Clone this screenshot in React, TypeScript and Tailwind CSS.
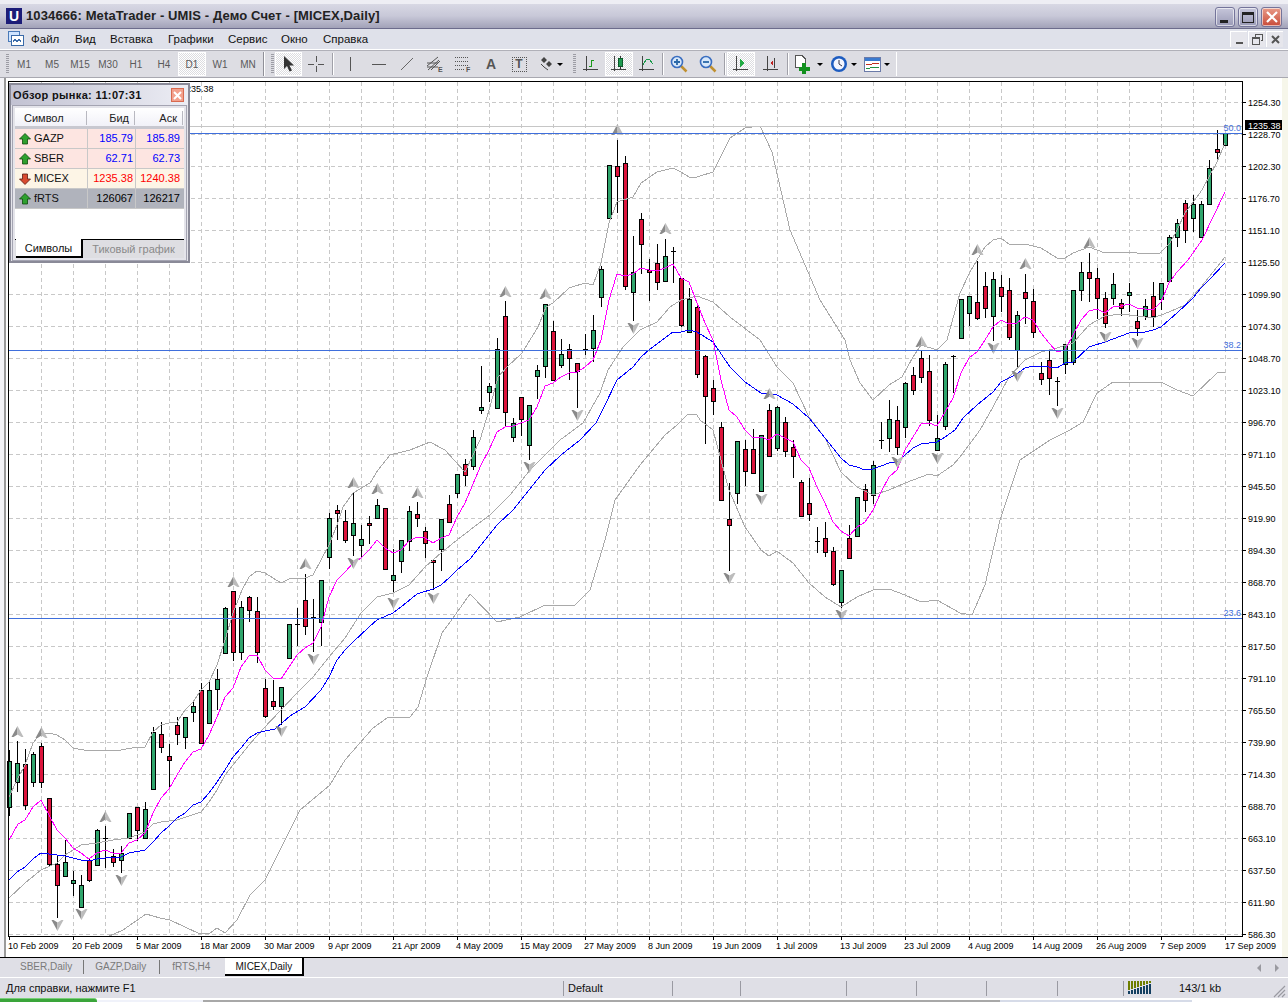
import React from 'react';

// [type, high, bodyTop, bodyBottom, low], bars are 8px apart starting at x=9
type Bar = ['g' | 'r' | 'd', number, number, number, number];

const bars: Bar[] = [
  ['g', 750, 761, 807, 816], ['g', 741, 763, 782, 792], ['r', 749, 764, 805, 810], ['g', 752, 754, 782, 787],
  ['r', 743, 746, 782, 788], ['r', 798, 798, 864, 867], ['r', 855, 864, 885, 918], ['g', 840, 862, 876, 877],
  ['g', 871, 880, 883, 896], ['g', 875, 885, 907, 907], ['r', 859, 860, 880, 882], ['g', 829, 830, 865, 865],
  ['d', 826, 838, 838, 868], ['r', 849, 856, 862, 867], ['g', 846, 853, 860, 873], ['g', 813, 813, 838, 838],
  ['r', 807, 807, 830, 841], ['g', 802, 809, 838, 838], ['g', 727, 732, 789, 789], ['r', 722, 734, 747, 753],
  ['r', 744, 756, 760, 789], ['r', 717, 725, 734, 745], ['g', 717, 717, 737, 749], ['g', 700, 706, 712, 722],
  ['r', 683, 690, 743, 743], ['g', 680, 690, 723, 723], ['g', 669, 679, 689, 710], ['g', 607, 608, 653, 653],
  ['r', 591, 591, 652, 661], ['g', 601, 607, 652, 660], ['r', 596, 597, 610, 622], ['r', 597, 611, 652, 663],
  ['r', 679, 688, 716, 718], ['r', 680, 701, 706, 710], ['g', 687, 687, 706, 725], ['g', 624, 624, 658, 658],
  ['d', 608, 624, 624, 646], ['r', 574, 600, 626, 635], ['d', 599, 617, 617, 652], ['g', 580, 580, 622, 646],
  ['g', 513, 518, 557, 569], ['r', 505, 510, 513, 540], ['r', 510, 521, 540, 543], ['g', 493, 523, 535, 556],
  ['g', 525, 539, 545, 557], ['r', 516, 523, 525, 544], ['g', 499, 505, 518, 519], ['r', 508, 508, 569, 569],
  ['g', 549, 575, 580, 593], ['g', 540, 540, 561, 573], ['g', 506, 511, 541, 551], ['r', 502, 514, 518, 527],
  ['r', 527, 531, 543, 558], ['r', 560, 560, 562, 590], ['g', 519, 519, 549, 571], ['r', 495, 504, 522, 523],
  ['g', 474, 474, 493, 498], ['r', 459, 464, 475, 486], ['g', 430, 437, 466, 470], ['g', 366, 407, 410, 414],
  ['g', 383, 386, 392, 402], ['g', 338, 349, 408, 408], ['r', 301, 316, 412, 427], ['g', 418, 423, 437, 442],
  ['r', 397, 397, 419, 436], ['g', 405, 405, 445, 460], ['g', 365, 370, 376, 399], ['g', 304, 304, 366, 378],
  ['r', 321, 331, 380, 380], ['g', 339, 354, 365, 368], ['r', 344, 349, 358, 380], ['r', 363, 363, 371, 408],
  ['d', 334, 349, 349, 355], ['g', 315, 330, 348, 362], ['g', 266, 269, 297, 307], ['g', 165, 165, 218, 218],
  ['r', 140, 166, 176, 213], ['r', 156, 163, 286, 290], ['g', 236, 272, 292, 321], ['r', 213, 219, 244, 274],
  ['r', 259, 270, 272, 301], ['r', 244, 263, 282, 290], ['g', 239, 256, 281, 281], ['d', 247, 251, 251, 283],
  ['r', 278, 278, 325, 327], ['g', 288, 299, 332, 332], ['r', 303, 307, 374, 378], ['r', 355, 356, 396, 444],
  ['r', 380, 388, 401, 415], ['r', 422, 427, 500, 501], ['r', 483, 519, 525, 571], ['g', 441, 441, 493, 504],
  ['r', 440, 449, 471, 486], ['r', 429, 449, 473, 474], ['g', 435, 435, 491, 491], ['r', 404, 410, 456, 457],
  ['g', 406, 407, 448, 451], ['r', 417, 422, 451, 457], ['r', 440, 447, 456, 478], ['r', 480, 482, 516, 517],
  ['r', 478, 503, 514, 521], ['d', 527, 541, 541, 553], ['r', 522, 538, 552, 557], ['r', 547, 551, 584, 586],
  ['g', 570, 570, 602, 608], ['r', 525, 538, 558, 559], ['g', 497, 497, 536, 536], ['r', 484, 489, 500, 512],
  ['g', 461, 465, 495, 504], ['d', 422, 440, 440, 449], ['g', 400, 419, 438, 452], ['r', 406, 420, 447, 455],
  ['g', 382, 383, 427, 438], ['r', 367, 375, 390, 395], ['r', 351, 358, 377, 383], ['r', 355, 371, 420, 426],
  ['g', 415, 438, 450, 450], ['g', 362, 364, 426, 430], ['d', 355, 356, 356, 393], ['g', 299, 299, 338, 338],
  ['g', 296, 296, 313, 326], ['r', 261, 302, 318, 320], ['r', 272, 286, 308, 318], ['g', 272, 279, 316, 341],
  ['r', 275, 287, 296, 312], ['r', 278, 290, 337, 340], ['g', 311, 315, 350, 369], ['r', 274, 292, 298, 324],
  ['r', 289, 301, 332, 338], ['r', 362, 373, 379, 385], ['r', 349, 360, 378, 395], ['d', 377, 381, 381, 406],
  ['g', 344, 344, 364, 374], ['g', 290, 290, 362, 365], ['g', 262, 272, 290, 301], ['r', 253, 272, 278, 302],
  ['r', 268, 278, 298, 319], ['r', 292, 298, 323, 328], ['g', 273, 284, 298, 305], ['r', 299, 303, 308, 316],
  ['g', 283, 292, 295, 312], ['r', 310, 321, 328, 336], ['g', 299, 306, 316, 320], ['r', 282, 296, 316, 327],
  ['g', 283, 283, 299, 310], ['g', 235, 237, 281, 282], ['g', 219, 223, 237, 247], ['r', 200, 203, 230, 243],
  ['g', 195, 204, 218, 232], ['g', 201, 204, 237, 238], ['g', 160, 168, 204, 204], ['r', 130, 149, 152, 162],
  ['g', 133, 133, 145, 145],
];

const magenta =
  '8,842 18,824 25,820 33,807 41,800 49,815 57,830 65,838 73,848 81,853 89,859 97,853 105,850 113,853 121,853 129,843 137,840 145,833 153,813 161,798 169,789 177,775 185,762 193,752 201,749 209,735 217,717 225,697 233,688 241,667 249,656 257,655 265,670 273,678 281,679 289,667 297,655 305,648 313,643 321,627 329,597 337,580 345,572 353,563 361,558 369,550 377,540 385,548 393,553 401,550 409,541 417,537 425,538 433,543 441,538 449,535 457,517 465,503 473,484 481,465 489,450 497,432 505,427 513,426 521,423 529,420 537,407 545,386 553,383 561,377 569,373 577,372 585,367 593,360 601,340 609,300 617,274 625,276 633,274 641,268 649,270 657,271 665,268 673,264 681,278 689,282 697,303 705,323 713,340 721,380 729,410 737,417 745,430 753,438 761,437 769,440 777,434 785,438 793,442 801,460 809,468 817,487 825,503 833,522 841,531 849,536 857,527 865,522 873,510 881,492 889,477 897,470 905,450 913,437 921,424 929,423 937,426 945,412 953,398 961,373 969,358 977,352 985,340 993,327 1001,320 1009,324 1017,323 1025,317 1033,320 1041,333 1049,343 1057,352 1065,350 1073,335 1081,320 1089,311 1097,309 1105,313 1113,307 1121,306 1129,304 1137,308 1145,309 1153,310 1161,302 1169,283 1177,272 1188,260 1202,240 1225,192';
const blue =
  '9,880 17,872 25,867 33,859 41,853 49,854 65,856 81,860 89,861 97,859 105,858 121,857 129,853 145,850 153,842 161,833 169,826 177,818 185,813 193,805 201,802 209,793 217,782 225,770 233,757 241,748 249,738 257,733 265,731 275,729 290,716 305,707 321,690 329,677 337,660 345,650 353,642 369,627 377,620 393,613 401,607 417,594 433,589 441,585 449,578 457,570 470,559 481,545 497,525 513,510 529,490 545,470 561,455 580,440 596,423 604,407 617,380 633,367 641,357 649,350 665,338 673,332 681,332 689,330 697,332 713,342 730,367 745,382 761,393 777,395 793,404 809,418 825,438 841,458 849,465 857,467 865,470 873,469 881,466 889,463 897,462 905,455 913,448 921,444 937,442 945,437 955,430 963,418 977,405 993,392 1001,382 1017,374 1025,368 1033,366 1049,367 1057,368 1065,363 1073,362 1089,347 1105,342 1121,336 1129,333 1145,332 1153,330 1161,327 1169,320 1177,313 1193,298 1201,288 1209,280 1225,263';
const bandTop =
  '9,797 17,780 25,765 33,743 41,733 49,733 57,735 65,740 73,748 89,751 105,750 121,750 137,747 145,747 153,732 161,725 169,723 177,722 185,710 193,702 201,690 209,682 217,665 225,640 233,613 242,590 249,577 257,571 265,573 273,578 281,583 289,579 297,578 305,578 313,575 321,560 329,545 337,525 343,507 353,493 370,483 378,470 390,455 410,450 430,442 445,450 465,472 480,440 490,407 498,377 507,367 522,353 538,327 546,307 553,303 569,288 585,283 593,285 601,263 609,223 617,202 633,197 641,183 657,172 673,168 681,172 689,177 697,177 713,172 730,138 745,128 760,126 772,152 790,230 820,300 845,340 850,360 860,383 873,400 889,385 902,377 913,357 921,345 937,350 947,340 960,293 970,272 977,260 985,247 993,240 1001,238 1009,244 1025,244 1041,248 1057,258 1065,258 1073,253 1089,247 1105,253 1121,252 1153,254 1160,253 1170,243 1177,230 1185,213 1202,190 1217,162 1225,143';
const bandMid =
  '9,898 25,883 41,870 57,863 65,855 81,845 97,843 113,840 129,838 145,832 153,824 161,822 177,820 201,812 209,802 217,790 225,775 233,765 241,755 249,745 262,730 281,710 297,693 313,677 329,657 345,638 361,613 377,597 393,593 409,585 425,567 441,553 457,540 470,530 490,515 510,495 530,470 545,455 560,440 583,423 600,393 608,370 623,347 640,330 657,322 670,307 681,300 697,296 713,302 730,317 760,340 777,367 793,383 809,417 825,438 833,455 841,472 857,487 873,495 889,490 905,483 929,474 937,476 953,465 960,457 980,430 993,407 1009,377 1025,360 1041,352 1057,348 1073,343 1089,325 1105,316 1121,314 1153,318 1169,312 1185,305 1201,287 1225,257';
const bandLow =
  '95,936 107,937 123,930 146,914 160,918 170,920 200,934 210,933 217,928 225,933 237,920 250,895 265,880 285,840 300,810 330,785 345,760 373,728 387,718 410,717 418,707 427,677 442,633 453,618 470,594 497,622 520,617 545,605 575,605 590,590 605,540 615,500 640,465 665,435 677,425 688,414 697,415 700,420 713,430 729,490 745,527 761,550 769,556 777,551 793,563 809,583 825,597 841,607 857,597 873,590 889,589 905,595 921,602 937,600 960,613 972,615 985,585 1000,520 1020,460 1050,440 1070,430 1083,422 1097,393 1113,382 1161,382 1177,390 1193,396 1217,373 1225,372';

const upArrows = [[17, 732], [41, 733], [105, 817], [233, 582], [305, 564], [353, 483], [377, 489], [417, 493], [505, 292], [545, 294], [617, 130], [665, 229], [769, 394], [921, 342], [977, 250], [1025, 264], [1089, 243]];
const downArrows = [[57, 925], [81, 914], [121, 880], [281, 731], [313, 659], [353, 563], [393, 603], [433, 598], [529, 467], [577, 415], [633, 328], [729, 578], [761, 499], [841, 615], [897, 462], [937, 458], [993, 348], [1017, 376], [1057, 413], [1105, 337], [1137, 343]];

const prices = ['1254.30', '1228.70', '1202.30', '1176.70', '1151.10', '1125.50', '1099.90', '1074.30', '1048.70', '1023.10', '996.70', '971.10', '945.50', '919.90', '894.30', '868.70', '843.10', '817.50', '791.10', '765.50', '739.90', '714.30', '688.70', '663.10', '637.50', '611.90', '586.30'];
const dates = ['10 Feb 2009', '20 Feb 2009', '5 Mar 2009', '18 Mar 2009', '30 Mar 2009', '9 Apr 2009', '21 Apr 2009', '4 May 2009', '15 May 2009', '27 May 2009', '8 Jun 2009', '19 Jun 2009', '1 Jul 2009', '13 Jul 2009', '23 Jul 2009', '4 Aug 2009', '14 Aug 2009', '26 Aug 2009', '7 Sep 2009', '17 Sep 2009'];

function Chart() {
  const gridX: number[] = [];
  for (let x = 41; x < 1242; x += 32) gridX.push(x);

  return (
    <svg width={1276} height={879} viewBox="6 78 1276 879" className="block" fontSize={9}>
      <rect x={6} y={78} width={1276} height={879} fill="#ffffff" />
      <g stroke="#c8c8c8" strokeDasharray="4 3" shapeRendering="crispEdges">
        {gridX.map((x) => (
          <line key={x} x1={x + 0.5} y1={82} x2={x + 0.5} y2={936} />
        ))}
        {prices.map((_, i) => (
          <line key={i} x1={9} y1={102.5 + i * 32} x2={1242} y2={102.5 + i * 32} />
        ))}
      </g>
      <g shapeRendering="crispEdges">
        {bars.map(([t, hi, top, bot, lo], i) => {
          const x = 9 + i * 8;
          return (
            <g key={i}>
              <line x1={x + 0.5} y1={hi} x2={x + 0.5} y2={lo} stroke="#000" />
              {t === 'd' ? (
                <line x1={x - 2} y1={top + 0.5} x2={x + 3} y2={top + 0.5} stroke="#000" />
              ) : (
                <rect x={x - 1.5} y={top + 0.5} width={4} height={Math.max(bot - top, 1)} fill={t === 'g' ? '#2fa56c' : '#dc143c'} stroke="#000" />
              )}
            </g>
          );
        })}
      </g>
      <g fill="none" strokeWidth={1} shapeRendering="crispEdges">
        <polyline points={bandTop} stroke="#a9a9a9" />
        <polyline points={bandMid} stroke="#a9a9a9" />
        <polyline points={bandLow} stroke="#a9a9a9" />
        <polyline points={blue} stroke="#0000ff" />
        <polyline points={magenta} stroke="#ff00ff" />
      </g>
      <g>
        {upArrows.map(([x, y]) => (
          <g key={`${x}-${y}`} transform={`translate(${x + 0.5} ${y})`}>
            <path d="M0 -6 L-6 5 L-4 5 L0 2.5Z" fill="#8a8a8a" />
            <path d="M0 -6 L6 5 L4 5 L0 2.5Z" fill="#bcbcbc" />
          </g>
        ))}
        {downArrows.map(([x, y]) => (
          <g key={`${x}-${y}`} transform={`translate(${x + 0.5} ${y})`}>
            <path d="M0 6 L-6 -5 L-4 -5 L0 -2.5Z" fill="#8a8a8a" />
            <path d="M0 6 L6 -5 L4 -5 L0 -2.5Z" fill="#bcbcbc" />
          </g>
        ))}
      </g>
      <g shapeRendering="crispEdges" stroke="#c6c6c6">
        <line x1={8} y1={126.5} x2={1242} y2={126.5} />
      </g>
      <g shapeRendering="crispEdges" stroke="#3f6fdc">
        <line x1={8} y1={133.5} x2={1242} y2={133.5} />
        <line x1={8} y1={350.5} x2={1242} y2={350.5} />
        <line x1={8} y1={618.5} x2={1242} y2={618.5} />
      </g>
      <g fill="#3f6fdc" textAnchor="end">
        <text x={1241} y={131}>50.0</text>
        <text x={1241} y={348}>38.2</text>
        <text x={1241} y={616}>23.6</text>
      </g>
      <text x={181} y={92} fill="#000">1235.38</text>
      {/* axes */}
      <rect x={8.5} y={81.5} width={1234} height={855} fill="none" stroke="#000" shapeRendering="crispEdges" />
      <g shapeRendering="crispEdges" stroke="#000">
        {prices.map((_, i) => (
          <line key={i} x1={1243} y1={102.5 + i * 32} x2={1246} y2={102.5 + i * 32} />
        ))}
        {dates.map((_, i) => (
          <line key={i} x1={9.5 + i * 64} y1={937} x2={9.5 + i * 64} y2={940} />
        ))}
      </g>
      <g fill="#000">
        {prices.map((p, i) => (
          <text key={p} x={1248} y={106 + i * 32}>{p}</text>
        ))}
        {dates.map((d, i) => (
          <text key={d} x={i === 19 ? 1225 : 8 + i * 64} y={949}>{d}</text>
        ))}
      </g>
      <rect x={1245} y={120} width={37} height={10} fill="#000" />
      <text x={1248} y={129} fill="#fff">1235.38</text>
    </svg>
  );
}

const pressed =
  'bg-[repeating-conic-gradient(#ffffff_0%_25%,#dcdce0_0%_50%)] bg-[length:2px_2px] border border-white';

function Grip() {
  return <div className="w-[3px] h-[20px] mx-[1px] bg-[repeating-linear-gradient(#9c9ca4_0_1px,transparent_1px_2px)]" />;
}

function Sep({ tight }: { tight?: boolean }) {
  return <div className={`w-[2px] h-[22px] border-l border-[#a0a0a8] bg-white ${tight ? 'mx-[1px]' : 'mx-[2px]'}`} />;
}

function TfButton({ label, active }: { label: string; active?: boolean }) {
  return (
    <div className={`w-[28px] h-[24px] pt-[1px] flex items-center justify-center text-[10px] text-[#5a5a5a] ${active ? pressed : ''}`}>
      {label}
    </div>
  );
}

function Tool({ children, active, w }: { children: React.ReactNode; active?: boolean; w?: string }) {
  return (
    <div className={`${w ?? 'w-[28px]'} h-[24px] shrink-0 flex items-center justify-center ${active ? pressed : ''}`}>
      {children}
    </div>
  );
}

function Caret() {
  return <div className="w-0 h-0 ml-[3px] border-x-[3px] border-x-transparent border-t-[3px] border-t-black" />;
}

function AxisIcon({ children }: { children: React.ReactNode }) {
  return (
    <svg width={16} height={18} viewBox="0 0 16 18" shapeRendering="crispEdges">
      <path d="M3.5 1V16M0 14.5H15" stroke="#444" fill="none" />
      {children}
    </svg>
  );
}

function Magnifier({ plus }: { plus?: boolean }) {
  return (
    <svg width={18} height={18} viewBox="0 0 18 18">
      <line x1={11} y1={11} x2={16.5} y2={16.5} stroke="#c09030" strokeWidth={2.5} />
      <circle cx={7} cy={7} r={5.5} fill="#d8e8fa" stroke="#3a6ec0" strokeWidth={1.6} />
      <path d={plus ? 'M4 7H10M7 4V10' : 'M4 7H10'} stroke="#2a68a8" strokeWidth={1.8} />
    </svg>
  );
}

function Toolbar() {
  return (
    <div className="h-[27px] flex items-center pl-[5px] bg-[#dddde3] border-b border-[#a8a8b0] text-[#444]">
      <Grip />
      {['M1', 'M5', 'M15', 'M30', 'H1', 'H4'].map((t) => (
        <TfButton key={t} label={t} />
      ))}
      <TfButton label="D1" active />
      <TfButton label="W1" />
      <TfButton label="MN" />
      <div className="w-[1px]" />
      <div className="w-[1px] h-[24px] bg-[#909098]" />
      <div className="w-[1px] h-[24px] bg-white" />
      <div className="w-[5px]" />
      <Grip />
      <Tool active w="w-[27px]">
        <svg width={12} height={16} viewBox="0 0 12 16"><path d="M1 0V13L4 10L6.5 15.5L9 14.5L6.5 9.5L11 9.5Z" fill="#333" /></svg>
      </Tool>
      <Tool>
        <svg width={16} height={16} viewBox="0 0 16 16" shapeRendering="crispEdges"><path d="M8.5 0V6M8.5 10V16M0 8.5H6M10 8.5H16" stroke="#555" fill="none" /></svg>
      </Tool>
      <Sep />
      <Tool w="w-[28px]"><div className="w-[1px] h-[14px] bg-[#555]" /></Tool>
      <Tool w="w-[29px]"><div className="w-[14px] h-[1px] bg-[#555]" /></Tool>
      <Tool>
        <svg width={14} height={14} viewBox="0 0 14 14"><line x1={1} y1={13} x2={13} y2={1} stroke="#666" /></svg>
      </Tool>
      <Tool>
        <svg width={18} height={18} viewBox="0 0 18 18" fill="none" stroke="#555"><path d="M1 11L12 2M1 8H12M1 12H12M2 15L13 5M5 15L14 6" /><text x={12} y={17} fontSize={7} fontWeight={700} fill="#555" stroke="none">E</text></svg>
      </Tool>
      <Tool>
        <svg width={18} height={18} viewBox="0 0 18 18" fill="none" stroke="#555" strokeDasharray="1 1" shapeRendering="crispEdges"><path d="M1 2.5H14M1 6.5H14M1 10.5H14M1 14.5H10" /><text x={12} y={17} fontSize={7} fontWeight={700} fill="#555" stroke="none" strokeDasharray="0">F</text></svg>
      </Tool>
      <Tool><span className="text-[14px] font-bold text-[#555]">A</span></Tool>
      <Tool>
        <div className="w-[15px] h-[15px] border border-dotted border-[#555] flex items-center justify-center text-[12px] font-bold text-[#555] leading-none">T</div>
      </Tool>
      <Tool w="w-[36px]">
        <svg width={14} height={14} viewBox="0 0 14 14" fill="#444"><path d="M4 0L7 3L4 6L1 3ZM9 4L12 7L9 10L6 7Z" /><path d="M1 7L4 10L8 13" stroke="#444" fill="none" /></svg>
        <Caret />
      </Tool>
      <div className="w-[3px]" />
      <Grip />
      <Tool>
        <AxisIcon><path d="M8.5 11V5M8.5 11H6M8.5 5H11" stroke="#1a9a1a" fill="none" /></AxisIcon>
      </Tool>
      <Tool active>
        <AxisIcon><rect x={7} y={3} width={4} height={8} fill="#1f9a50" stroke="#0b5a2a" /><path d="M9 0.5V3M9 11V13.5" stroke="#333" /></AxisIcon>
      </Tool>
      <Tool>
        <AxisIcon><path d="M4 10L7 5L10 4L14 9" stroke="#1a9a4a" fill="none" /></AxisIcon>
      </Tool>
      <Sep tight />
      <Tool><Magnifier plus /></Tool>
      <Tool w="w-[30px]"><Magnifier /></Tool>
      <Sep tight />
      <Tool active>
        <AxisIcon><path d="M7 4L12 8L7 12Z" fill="#22aa44" /></AxisIcon>
      </Tool>
      <Tool w="w-[31px]">
        <svg width={16} height={18} viewBox="0 0 16 18" shapeRendering="crispEdges"><path d="M4.5 1V16M0 14.5H15M11.5 3V13" stroke="#444" fill="none" /><path d="M7 8L10 5.5V10.5Z" fill="#c02020" /></svg>
      </Tool>
      <Sep tight />
      <Tool w="w-[36px]">
        <svg width={20} height={20} viewBox="0 0 20 20" shapeRendering="crispEdges"><path d="M1.5 1.5H8L11 4.5V13H1.5Z" fill="#fff" stroke="#555" /><path d="M8 9H12V13H16V17H12V20H8V17H5V13H8Z" fill="#12901e" /></svg>
        <Caret />
      </Tool>
      <Tool w="w-[34px]">
        <svg width={18} height={18} viewBox="0 0 18 18"><circle cx={9} cy={9} r={8} fill="#1d5cc0" /><circle cx={9} cy={9} r={5.5} fill="#f4f6ff" /><path d="M9 5V9L12 11" stroke="#334" fill="none" /></svg>
        <Caret />
      </Tool>
      <Tool w="w-[34px]">
        <svg width={17} height={15} viewBox="0 0 17 15" shapeRendering="crispEdges"><rect x={0.5} y={0.5} width={16} height={14} fill="#fff" stroke="#6a7aa8" /><rect x={1} y={1} width={15} height={3} fill="#3a7ad0" /><path d="M2 7H8L11 6H15" stroke="#c03020" fill="none" /><path d="M2 11H6L10 10L15 11" stroke="#209040" fill="none" /></svg>
        <Caret />
      </Tool>
      <div className="w-[1px] h-[24px] bg-white ml-[2px]" />
    </div>
  );
}

function WinButton({ children, red }: { children: React.ReactNode; red?: boolean }) {
  return (
    <div
      className={`h-[20px] rounded-[3px] border border-[#74749a] shadow-[inset_0_0_0_1px_rgba(255,255,255,0.6)] flex items-center justify-center shrink-0 ${
        red ? 'w-[21px] bg-gradient-to-b from-[#e89a88] to-[#c84a38]' : 'w-[20px] bg-gradient-to-b from-[#c6c6da] to-[#9a9ab6]'
      }`}
    >
      {children}
    </div>
  );
}

function MdiButton({ children }: { children: React.ReactNode }) {
  return (
    <div className="w-[17px] h-[16px] flex items-center justify-center bg-[#e6e6ec] border-t border-l border-white">{children}</div>
  );
}

function ArrowGlyph({ down }: { down?: boolean }) {
  return (
    <svg width={12} height={12} viewBox="0 0 12 12" className="shrink-0">
      <path
        d={down ? 'M6 11.5L0.5 6H3.5V1H8.5V6H11.5Z' : 'M6 0.5L11.5 6H8.5V11H3.5V6H0.5Z'}
        fill={down ? '#d84a30' : '#2ea02e'}
        stroke={down ? '#5a1a10' : '#0e4a0e'}
        strokeWidth={0.8}
      />
    </svg>
  );
}

type Quote = { name: string; bid: string; ask: string; bg: string; color: string; down?: boolean };

const quotes: Quote[] = [
  { name: 'GAZP', bid: '185.79', ask: '185.89', bg: 'bg-[#fde5e1]', color: 'text-[#0000ff]' },
  { name: 'SBER', bid: '62.71', ask: '62.73', bg: 'bg-[#fde5e1]', color: 'text-[#0000ff]' },
  { name: 'MICEX', bid: '1235.38', ask: '1240.38', bg: 'bg-[#fdf5e6]', color: 'text-[#ff0000]', down: true },
  { name: 'fRTS', bid: '126067', ask: '126217', bg: 'bg-[#b0b3bc]', color: 'text-black' },
];

function MarketWatch() {
  return (
    <div className="absolute left-[9px] top-[83px] w-[181px] h-[180px] bg-[#e4e4ea] border-2 border-[#8a8a98] text-[11px] flex flex-col">
      <div className="h-[20px] shrink-0 flex items-center justify-between pl-[2px] pr-[3px] bg-gradient-to-r from-[#c2c2d2] to-[#ecedf4]">
        <span className="font-bold text-[11px] text-[#111] tracking-[0.35px]">Обзор рынка: 11:07:31</span>
        <div className="w-[13px] h-[14px] mr-[1px] bg-[#f2a08c] border border-[#d86a50] flex items-center justify-center">
          <svg width={9} height={9} viewBox="0 0 9 9"><path d="M1 1L8 8M8 1L1 8" stroke="#fff" strokeWidth={2} /></svg>
        </div>
      </div>
      <div className="flex-1 mx-[1px] border border-[#a4a4b2] p-[2px]">
        <div className="h-full bg-white flex flex-col">
          <div className="h-[21px] shrink-0 flex items-center pt-[2px] bg-gradient-to-b from-white to-[#f1f1f8] border-b-[3px] border-[#c8c8d0] text-[#222]">
            <div className="w-[71px] pl-[9px]">Символ</div>
            <div className="w-[48px] h-[14px] border-l border-[#b8b8c0] text-right pr-[5px] leading-[14px]">Бид</div>
            <div className="w-[49px] h-[14px] border-x border-[#b8b8c0] text-right pr-[5px] leading-[14px]">Аск</div>
          </div>
          {quotes.map((q) => (
            <div key={q.name} className={`h-[20px] shrink-0 flex items-center border-b border-[#c8c8c8] ${q.bg}`}>
              <div className="w-[72px] flex items-center gap-[3px] pl-[4px] text-[#111]">
                <ArrowGlyph down={q.down} />
                {q.name}
              </div>
              <div className={`w-[48px] h-full text-right pr-[2px] leading-[19px] border-l border-[#c8c8c8] ${q.color}`}>{q.bid}</div>
              <div className={`w-[48px] h-full text-right pr-[3px] leading-[19px] border-l border-[#c8c8c8] ${q.color}`}>{q.ask}</div>
            </div>
          ))}
          <div className="flex-1" />
          <div className="h-[19px] shrink-0 flex border-t border-black bg-[#dedee2]">
            <div className="w-[67px] -mt-[1px] pt-[1px] flex items-center justify-center bg-white border-b-2 border-r-2 border-black text-[#111] ml-[1px]">Символы</div>
            <div className="flex-1 pt-[1px] flex items-center justify-center text-[#8a8a8a]">Тиковый график</div>
          </div>
        </div>
      </div>
    </div>
  );
}

function Tab({ label, active, pad, last }: { label: string; active?: boolean; pad?: string; last?: boolean }) {
  if (active) {
    return (
      <div className="w-[79px] h-[18px] flex items-center justify-center bg-white border-r-2 border-b-2 border-black text-[#111]">{label}</div>
    );
  }
  return (
    <div className={`h-[14px] mt-[2px] flex items-center text-[#7a7a7a] leading-none ${pad ?? 'px-[11px]'} ${last ? '' : 'border-r border-[#777]'}`}>
      {label}
    </div>
  );
}

function StatusCell({ w, children }: { w: string; children?: React.ReactNode }) {
  return <div className={`${w} h-[15px] shrink-0 border-l border-[#9a9aa2] pl-[4px] leading-[15px]`}>{children}</div>;
}

const menu = [
  { label: 'Файл', w: 'w-[44px]' },
  { label: 'Вид', w: 'w-[35px]' },
  { label: 'Вставка', w: 'w-[58px]' },
  { label: 'Графики', w: 'w-[60px]' },
  { label: 'Сервис', w: 'w-[53px]' },
  { label: 'Окно', w: 'w-[42px]' },
  { label: 'Справка', w: 'w-[60px]' },
];

export default function App() {
  return (
    <div className="relative w-[1288px] h-[1002px] overflow-hidden bg-[#f4f4f8] font-['Liberation_Sans',sans-serif] text-[11px] text-black">
      <div className="h-[4px] bg-[#eeeef4]" />
      {/* title bar */}
      <div className="h-[24px] flex items-center pl-[6px] pr-[6px] bg-gradient-to-b from-[#d8d8e4] via-[#c8c8d8] to-[#a2a2b8]">
        <div className="w-[16px] h-[16px] bg-[#1c1c78] flex items-center justify-center text-white font-bold text-[14px] leading-none shrink-0">U</div>
        <span className="ml-[4px] text-[13px] font-bold text-[#222] tracking-[0.12px]">1034666: MetaTrader - UMIS - Демо Счет - [MICEX,Daily]</span>
        <div className="ml-auto mt-[2px] flex gap-[3px]">
          <WinButton><div className="w-[8px] h-[3px] bg-[#222] mt-[8px] mr-[3px]" /></WinButton>
          <WinButton><div className="w-[12px] h-[11px] border border-[#222] border-t-[3px]" /></WinButton>
          <WinButton red>
            <svg width={12} height={12} viewBox="0 0 12 12"><path d="M1 1L11 11M11 1L1 11" stroke="#fff" strokeWidth={2.2} /></svg>
          </WinButton>
        </div>
      </div>
      <div className="h-[1px] bg-[#6c6c8c]" />
      {/* menu */}
      <div className="h-[20px] flex items-center pl-[8px] pr-[5px] bg-[#dfe1ea]">
        <svg width={16} height={16} viewBox="0 0 16 16" shapeRendering="crispEdges" className="shrink-0">
          <rect x={0.5} y={0.5} width={11} height={10} fill="#cfe4ff" stroke="#4a7ab8" />
          <rect x={3.5} y={4.5} width={12} height={10} fill="#fff" stroke="#3a6aa8" />
          <path d="M5 11L7 8L9 11L11 8L13 11" stroke="#3a6aa8" fill="none" />
        </svg>
        <div className="flex ml-[7px] pt-[2px] text-[11.5px] text-[#111]">
          {menu.map((m) => (
            <span key={m.label} className={m.w}>{m.label}</span>
          ))}
        </div>
        <div className="ml-auto flex gap-[1px]">
          <MdiButton><div className="w-[7px] h-[2px] bg-[#555] mt-[6px]" /></MdiButton>
          <MdiButton>
            <svg width={11} height={11} viewBox="0 0 11 11" shapeRendering="crispEdges"><path d="M3.5 2.5V0.5H10.5V6.5H8.5M0.5 3.5H7.5V10.5H0.5ZM0.5 4.5H7.5" stroke="#555" fill="none" /></svg>
          </MdiButton>
          <MdiButton>
            <svg width={9} height={9} viewBox="0 0 9 9"><path d="M1 1L8 8M8 1L1 8" stroke="#555" strokeWidth={2} /></svg>
          </MdiButton>
        </div>
      </div>
      <div className="h-[2px] bg-white border-b border-[#b0b0b8]" />
      <Toolbar />
      {/* chart window */}
      <div className="flex h-[879px]">
        <div className="w-[4px] bg-[#f4f4f8]" />
        <div className="w-[2px] bg-[#9a9a9a]" />
        <Chart />
        <div className="w-[6px] bg-[#f6f6ea]" />
      </div>
      <MarketWatch />
      {/* chart tabs */}
      <div className="h-[20px] flex items-start bg-[#dfdfe6] border-t border-black text-[10px] pl-[5px]">
        <Tab label="SBER,Daily" pad="pl-[15px] pr-[11px]" />
        <Tab label="GAZP,Daily" pad="pl-[11px] pr-[13px]" />
        <Tab label="fRTS,H4" pad="pl-[12px] pr-[11px]" last />
        <div className="w-[4px]" />
        <Tab label="MICEX,Daily" active />
        <div className="ml-auto flex items-center gap-[14px] mt-[6px] mr-[9px] text-[#9a9aa0]">
          <div className="w-0 h-0 border-y-[4px] border-y-transparent border-r-[4px] border-r-[#9a9aa0]" />
          <div className="w-0 h-0 border-y-[4px] border-y-transparent border-l-[4px] border-l-[#9a9aa0]" />
        </div>
      </div>
      <div className="h-[1px] bg-white" />
      {/* status bar */}
      <div className="relative h-[20px] flex items-center pt-[1px] bg-[#dfdfe6] text-[11px] text-[#111]">
        <div className="w-[563px] pl-[6px] shrink-0">Для справки, нажмите F1</div>
        <StatusCell w="w-[109px]">Default</StatusCell>
        <StatusCell w="w-[68px]" />
        <StatusCell w="w-[106px]" />
        <StatusCell w="w-[70px]" />
        <StatusCell w="w-[70px]" />
        <StatusCell w="w-[71px]" />
        <StatusCell w="w-[66px]" />
        <div className="w-[56px] h-[15px] shrink-0 border-l border-[#9a9aa2] pl-[4px]">
          <svg width={24} height={13} viewBox="0 0 24 13" shapeRendering="crispEdges">
            <path d="M0 0h2v9H0zM3 0h2v8H3zM6 0h2v7H6zM9 0h2v6H9zM12 0h2v5h-2zM15 0h2v4h-2zM18 0h2v3h-2zM21 0h2v2h-2z" fill="#6e7e00" />
            <path d="M0 10h2v3H0zM3 9h2v4H3zM6 8h2v5H6zM9 7h2v6H9zM12 6h2v7h-2zM15 5h2v8h-2zM18 4h2v9h-2zM21 3h2v10h-2z" fill="#123e60" />
          </svg>
        </div>
        <span>143/1 kb</span>
        <svg width={14} height={14} viewBox="0 0 14 14" className="absolute right-[2px] bottom-0">
          <path d="M13 2L2 13M13 6L6 13M13 10L10 13" stroke="#9a9aa2" strokeWidth={1.2} />
        </svg>
      </div>
      {/* taskbar peeking in at the very bottom */}
      <div className="h-[4px] flex bg-white">
        <div className="w-[97px] rounded-tr-[3px] bg-[#3aa53a] border-t border-[#7ad07a]" />
        <div className="w-[106px] bg-[#f0f2fa] mt-[2px]" />
        <div className="w-[797px] bg-[#a8a8a8] mt-[2px]" />
        <div className="w-[192px] bg-[#d6dbe8] mt-[2px]" />
      </div>
    </div>
  );
}
